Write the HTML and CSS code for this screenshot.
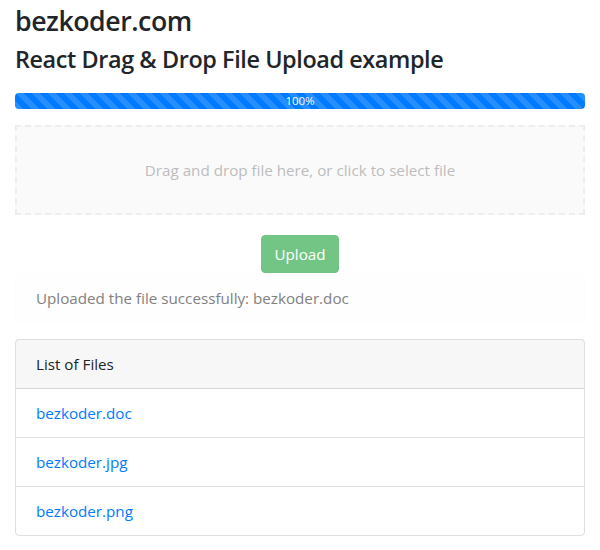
FILE: index.html
```html
<!DOCTYPE html>
<html>
<head>
<meta charset="utf-8">
<title>React Drag &amp; Drop File Upload example</title>
<link rel="stylesheet" href="styles.css">
</head>
<body>
<div class="container">
  <h3 class="site-title">bezkoder.com</h3>
  <h4 class="page-title">React Drag &amp; Drop File Upload example</h4>

  <div class="progress">
    <div class="progress-bar" style="width: 100%">100%</div>
  </div>

  <div class="dropzone">Drag and drop file here, or click to select file</div>

  <div class="actions">
    <button class="btn btn-success" disabled>Upload</button>
  </div>

  <div class="alert">Uploaded the file successfully: bezkoder.doc</div>

  <div class="card">
    <div class="card-header">List of Files</div>
    <ul class="list-group">
      <li class="list-item"><a href="#">bezkoder.doc</a></li>
      <li class="list-item"><a href="#">bezkoder.jpg</a></li>
      <li class="list-item"><a href="#">bezkoder.png</a></li>
    </ul>
  </div>
</div>
</body>
</html>
```
FILE: styles.css
```css
* { box-sizing: border-box; }
html, body { margin: 0; padding: 0; background: #fff; }
body {
  font-family: "Open Sans", "Noto Sans", sans-serif;
  font-size: 15.2px;
  line-height: 24px;
  color: #212529;
}
.container { padding: 0 15px; }

.site-title {
  margin: 4px 0 7px;
  font-size: 26.7px;
  line-height: 33.6px;
  font-weight: 600;
  letter-spacing: -0.45px;
}
.page-title {
  margin: 0 0 19.6px;
  font-size: 23.4px;
  line-height: 28.8px;
  font-weight: 600;
  letter-spacing: -0.4px;
}

.progress {
  display: flex;
  height: 16px;
  overflow: hidden;
  background: #e9ecef;
  border-radius: 4px;
  margin-bottom: 16px;
}
.progress-bar {
  display: flex;
  align-items: center;
  justify-content: center;
  color: #fff;
  font-size: 11.5px;
  line-height: 16px;
  background-color: #007bff;
  background-image: linear-gradient(45deg,
    rgba(255,255,255,.15) 25%, transparent 25%, transparent 50%,
    rgba(255,255,255,.15) 50%, rgba(255,255,255,.15) 75%, transparent 75%, transparent);
  background-size: 16px 16px;
}

.dropzone {
  height: 90px;
  display: flex;
  align-items: center;
  justify-content: center;
  border: 2px dashed #eeeeee;
  background: #fafafa;
  color: #bdbdbd;
  margin-bottom: 20px;
}

.actions { text-align: center; }
.btn {
  display: inline-block;
  font-family: inherit;
  font-size: 15.2px;
  line-height: 24px;
  padding: 6px 12px;
  border: 1px solid transparent;
  border-radius: 4px;
  vertical-align: top;
}
.btn-success {
  color: #fff;
  background: #28a745;
  border-color: #28a745;
}
.btn:disabled { opacity: .65; }

.alert {
  padding: 12px 20px;
  border: 1px solid #fdfdfe;
  background: #fefefe;
  color: #818182;
  border-radius: 4px;
  margin-bottom: 16px;
}

.card {
  border: 1px solid rgba(0,0,0,.125);
  border-radius: 4px;
  overflow: hidden;
}
.card-header {
  padding: 12px 20px;
  background: rgba(0,0,0,.03);
  border-bottom: 1px solid rgba(0,0,0,.125);
}
.list-group { list-style: none; margin: 0; padding: 0; }
.list-item {
  padding: 12px 20px;
  border-bottom: 1px solid rgba(0,0,0,.125);
}
.list-item:last-child { border-bottom: 0; }
.list-item a { color: #007bff; text-decoration: none; }
```
